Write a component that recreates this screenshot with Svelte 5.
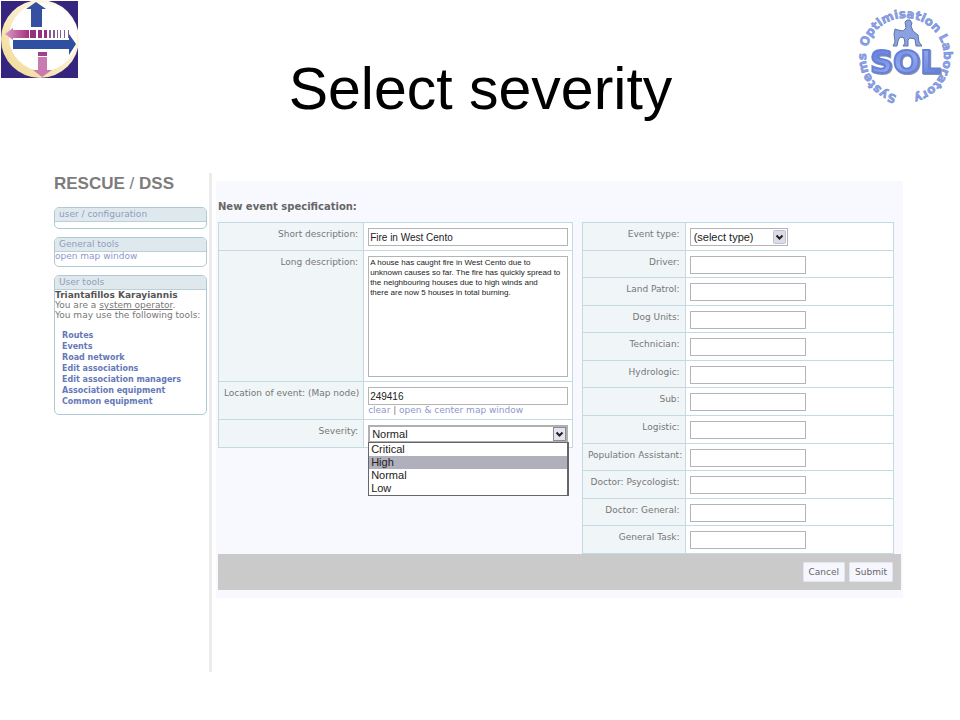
<script lang="ts">
	const tools = [
		'Routes',
		'Events',
		'Road network',
		'Edit associations',
		'Edit association managers',
		'Association equipment',
		'Common equipment'
	];

	const severities = ['Critical', 'High', 'Normal', 'Low'];

	let resources = [
		{ id: 'driver', label: 'Driver:', value: '' },
		{ id: 'land-patrol', label: 'Land Patrol:', value: '' },
		{ id: 'dog-units', label: 'Dog Units:', value: '' },
		{ id: 'technician', label: 'Technician:', value: '' },
		{ id: 'hydrologic', label: 'Hydrologic:', value: '' },
		{ id: 'sub', label: 'Sub:', value: '' },
		{ id: 'logistic', label: 'Logistic:', value: '' },
		{ id: 'population', label: 'Population Assistant:', value: '' },
		{ id: 'psycologist', label: 'Doctor: Psycologist:', value: '' },
		{ id: 'doctor', label: 'Doctor: General:', value: '' },
		{ id: 'general-task', label: 'General Task:', value: '' }
	];

	let shortDescription = 'Fire in West Cento';
	let longDescription =
		'A house has caught fire in West Cento due to\n' +
		'unknown causes so far. The fire has quickly spread to\n' +
		'the neighbouring houses due to high winds and\n' +
		'there are now 5 houses in total burning.';
	let location = '249416';
	let severity = 'Normal';
	let highlighted = 'High';
	let listOpen = true;

	function pick(value: string) {
		severity = value;
		listOpen = false;
	}
</script>

<header>
	<svg class="logo" width="79" height="79" viewBox="0 0 79 79" aria-hidden="true">
		<defs>
			<linearGradient id="rim" x1="0" y1="1" x2="1" y2="0">
				<stop offset="0" stop-color="#f0d890" />
				<stop offset="0.6" stop-color="#fbf0d0" />
				<stop offset="1" stop-color="#ffffff" />
			</linearGradient>
			<linearGradient id="pink" x1="0" y1="0" x2="1" y2="0">
				<stop offset="0" stop-color="#dd9cc4" />
				<stop offset="1" stop-color="#a3307f" />
			</linearGradient>
		</defs>
		<rect x="1" y="1" width="77" height="77" fill="#35257f" />
		<circle cx="40" cy="39" r="39" fill="url(#rim)" />
		<circle cx="43" cy="37" r="34" fill="#fff" />
		<path d="M36 2 L46 9 H42 V27 H31 V9 H26 Z" fill="#3550a0" />
		<path d="M5 34 L13 28 V30 H29 V38 H13 V40 Z" fill="url(#pink)" />
		<path d="M30 30h6v8h-6zM38 30h4v8h-4zM44 30h3v8h-3z" fill="#96307c" />
		<path d="M49 30h2v8h-2zM53 30h2v8h-2zM57 30h1v8h-1zM60 30h1v8h-1zM64 30h1v8h-1zM68 30h1v8h-1z" fill="#8a5a94" />
		<path d="M13 40 H69 V34 L76 44 L69 55 V49 H13 Z" fill="#2f4fa0" />
		<path d="M38 52h9v4h-9z" fill="#a0408a" />
		<path d="M38 57 H47 V70 H52 L42 77 L33 70 H38 Z" fill="#c97bb0" />
	</svg>
	<h1>Select severity</h1>
	<svg class="logo" width="110" height="115" viewBox="0 0 110 115" role="img" aria-label="Systems Optimisation Laboratory">
		<defs>
			<path id="ring" d="M55 96 A39 39 0 0 1 55 18 A39 39 0 0 1 55 96" />
			<linearGradient id="sol" x1="0" y1="0" x2="1" y2="1">
				<stop offset="0" stop-color="#5270dc" />
				<stop offset="0.5" stop-color="#8fa5ec" />
				<stop offset="1" stop-color="#5872cc" />
			</linearGradient>
		</defs>
		<text class="ring">
			<textPath href="#ring" startOffset="8">Systems</textPath>
		</text>
		<text class="ring">
			<textPath href="#ring" startOffset="71">Optimisation</textPath>
		</text>
		<text class="ring">
			<textPath href="#ring" startOffset="162">Laboratory</textPath>
		</text>
		<path
			d="M55 22 L57 20 L60 20 L62 23 L61 26 L63 31 L68 35 L69 42 L72 46 L66 46 L65 39 L60 38 L58 40 L58 46 L53 46 L55 43 L54 38 L50 37 L48 41 L47 46 L43 46 L45 42 L44 34 L45 29 L48 30 L53 31 L56 28 Z"
			fill="#8ba2e0"
			stroke="#5f74a4"
		/>
		<text class="sol" x="20" y="73">SOL</text>
	</svg>
</header>

<main>
	<aside>
		<h2>RESCUE <span>/</span> DSS</h2>

		<section class="box">
			<h3>user / configuration</h3>
			<div class="box-body"></div>
		</section>

		<section class="box">
			<h3>General tools</h3>
			<div class="box-body general">
				<a href="#map">open map window</a>
			</div>
		</section>

		<section class="box">
			<h3>User tools</h3>
			<div class="box-body">
				<strong>Triantafillos Karayiannis</strong>
				<p>You are a <u>system operator</u>.</p>
				<p>You may use the following tools:</p>
				<ul class="tools">
					{#each tools as tool}
						<li><a href="#tool">{tool}</a></li>
					{/each}
				</ul>
			</div>
		</section>
	</aside>

	<form class="panel" on:submit|preventDefault>
		<h4>New event specification:</h4>

		<div class="columns">
			<table class="event">
				<tbody>
					<tr>
						<th><label for="short">Short description:</label></th>
						<td><input id="short" type="text" bind:value={shortDescription} /></td>
					</tr>
					<tr>
						<th><label for="long">Long description:</label></th>
						<td><textarea id="long" spellcheck="false" bind:value={longDescription}></textarea></td>
					</tr>
					<tr>
						<th><label for="location">Location of event: (Map node)</label></th>
						<td>
							<input id="location" type="text" bind:value={location} />
							<div class="map-links">
								<a href="#clear">clear</a> | <a href="#center">open &amp; center map window</a>
							</div>
						</td>
					</tr>
					<tr>
						<th><label for="severity">Severity:</label></th>
						<td>
							<div class="select open">
								<select id="severity" bind:value={severity}>
									{#each severities as item}
										<option>{item}</option>
									{/each}
								</select>
								<svg class="arrow" width="13" height="14" viewBox="0 0 13 14" aria-hidden="true">
									<rect x="0.5" y="0.5" width="12" height="13" fill="#e4e4ee" stroke="#8c8c98" />
									<path d="M3.5 5.5 L6.5 8.5 L9.5 5.5" fill="none" stroke="#222" stroke-width="2" />
								</svg>
								{#if listOpen}
									<ul class="list" role="listbox" aria-label="Severity">
										{#each severities as item}
											<li role="option" aria-selected={item === highlighted}>
												<button
													type="button"
													class:active={item === highlighted}
													on:mouseenter={() => (highlighted = item)}
													on:click={() => pick(item)}>{item}</button
												>
											</li>
										{/each}
									</ul>
								{/if}
							</div>
						</td>
					</tr>
				</tbody>
			</table>

			<table class="resources">
				<tbody>
					<tr>
						<th><label for="type">Event type:</label></th>
						<td>
							<div class="select type">
								<select id="type">
									<option>(select type)</option>
								</select>
								<svg class="arrow" width="13" height="14" viewBox="0 0 13 14" aria-hidden="true">
									<rect x="0.5" y="0.5" width="12" height="13" rx="1" fill="#dcdce9" stroke="#c0c0d0" />
									<path d="M3.5 5.5 L6.5 8.5 L9.5 5.5" fill="none" stroke="#222" stroke-width="2" />
								</svg>
							</div>
						</td>
					</tr>
					{#each resources as resource}
						<tr>
							<th><label for={resource.id}>{resource.label}</label></th>
							<td><input id={resource.id} type="text" bind:value={resource.value} /></td>
						</tr>
					{/each}
				</tbody>
			</table>
		</div>

		<div class="actions">
			<button type="button">Cancel</button>
			<button type="submit">Submit</button>
		</div>
	</form>
</main>

<style>
	:global(body) {
		margin: 0;
		background: #fff;
	}

	header {
		display: flex;
		justify-content: space-between;
		align-items: flex-start;
		height: 173px;
		font-family: 'Liberation Sans', Arial, sans-serif;
	}

	.logo {
		display: block;
		flex: none;
	}

	h1 {
		margin: 0;
		padding: 55px 0 0 32px;
		font-size: 59px;
		line-height: 68px;
		font-weight: normal;
		color: #000;
	}

	.ring {
		font: bold 12px 'DejaVu Sans', sans-serif;
		fill: #8ba2ec;
		stroke: #6f86cc;
		stroke-width: 0.5px;
	}

	.sol {
		font: bold 32px 'DejaVu Sans', sans-serif;
		fill: url(#sol);
		stroke: #6580d8;
		stroke-width: 2px;
		filter: drop-shadow(1px 1px 0 #8c93a8);
	}

	main {
		display: flex;
		align-items: flex-start;
		padding: 0 57px 0 54px;
		font: 9px/10px 'DejaVu Sans', Verdana, sans-serif;
		color: #777;
	}

	a {
		color: #8d97cc;
		text-decoration: none;
	}

	aside {
		flex: none;
		width: 153px;
		min-height: 499px;
		padding-right: 2px;
		border-right: 3px solid #ececec;
	}

	h2 {
		margin: 0 0 13px;
		font: bold 17px/21px 'Liberation Sans', Arial, sans-serif;
		color: #7c7c7c;
	}

	h2 span {
		font-weight: normal;
	}

	.box {
		margin-bottom: 8px;
		border: 1px solid #aecad2;
		border-radius: 5px;
		overflow: hidden;
	}

	h3 {
		margin: 0;
		padding: 0 4px;
		font-size: 9px;
		line-height: 13px;
		font-weight: normal;
		color: #8f9dc0;
		background: #dfe8ec;
		border-bottom: 1px solid #b9d0d8;
	}

	.box-body {
		min-height: 6px;
	}

	.box-body.general {
		line-height: 8px;
		min-height: 14px;
	}

	strong {
		color: #555;
	}

	p {
		margin: 0;
	}

	.tools {
		margin: 10px 0 7px;
		padding: 0 0 0 7px;
		list-style: none;
		font-size: 8px;
		line-height: 11px;
		font-weight: bold;
	}

	.tools a {
		color: #6578b8;
	}

	.panel {
		flex: 1;
		margin: 8px 0 0 4px;
		padding: 20px 2px 8px 2px;
		background: #f8f9fe;
	}

	h4 {
		margin: 0 0 10px;
		font-size: 10px;
		line-height: 11px;
		color: #666;
	}

	.columns {
		display: grid;
		grid-template-columns: 355fr 312fr;
		gap: 9px;
		align-items: start;
		padding-right: 7px;
	}

	table {
		width: 100%;
		table-layout: fixed;
		border-collapse: collapse;
	}

	.resources {
		height: 332px;
	}

	th,
	td {
		border: 1px solid #c5dae0;
		vertical-align: top;
	}

	th {
		padding: 6px 5px 0;
		font-weight: normal;
		text-align: right;
		white-space: nowrap;
		background: #f0f5f8;
	}

	.event th {
		width: 41%;
		box-sizing: border-box;
	}

	.resources th {
		width: 33%;
		box-sizing: border-box;
	}

	td {
		padding: 5px 4px 4px;
		background: #fff;
	}

	.resources td {
		padding-bottom: 3px;
	}

	input,
	textarea,
	select {
		display: block;
		box-sizing: border-box;
		width: 100%;
		height: 18px;
		margin: 0;
		padding: 0 1px;
		border: 1px solid #b4b4b4;
		border-radius: 0;
		outline: none;
		background: #fff;
		font: 10px/14px 'Liberation Sans', Arial, sans-serif;
		color: #222;
	}

	.resources input {
		width: 116px;
	}

	textarea {
		height: 121px;
		padding: 1px;
		font-size: 8px;
		line-height: 10px;
		resize: none;
		white-space: pre;
		overflow: hidden;
	}

	.map-links {
		padding-top: 0;
	}

	.select {
		position: relative;
	}

	.select select {
		appearance: none;
		font-size: 11px;
		padding: 0 3px;
	}

	.select.open select {
		border: 2px solid #b0b0b0;
		padding: 0 2px;
	}

	.select.type {
		width: 98px;
	}

	.arrow {
		position: absolute;
		top: 2px;
		right: 2px;
		pointer-events: none;
	}

	.list {
		position: absolute;
		top: 17px;
		left: 0;
		right: -1px;
		margin: 0;
		padding: 0;
		list-style: none;
		background: #fff;
		border: 1px solid #666;
		border-right-width: 2px;
	}

	.list button {
		display: block;
		width: 100%;
		padding: 0 2px;
		border: 0;
		background: none;
		font: 11px/13px 'Liberation Sans', Arial, sans-serif;
		text-align: left;
		color: #222;
	}

	.list button.active {
		background: #b0b0bc;
	}

	.actions {
		display: flex;
		justify-content: flex-end;
		gap: 4px;
		padding: 8px;
		background: #cacaca;
	}

	.actions button {
		height: 20px;
		padding: 0 5px;
		border: 1px solid #e4e4ee;
		border-radius: 1px;
		background: #f6f6fe;
		font: inherit;
		color: #666;
	}
</style>
